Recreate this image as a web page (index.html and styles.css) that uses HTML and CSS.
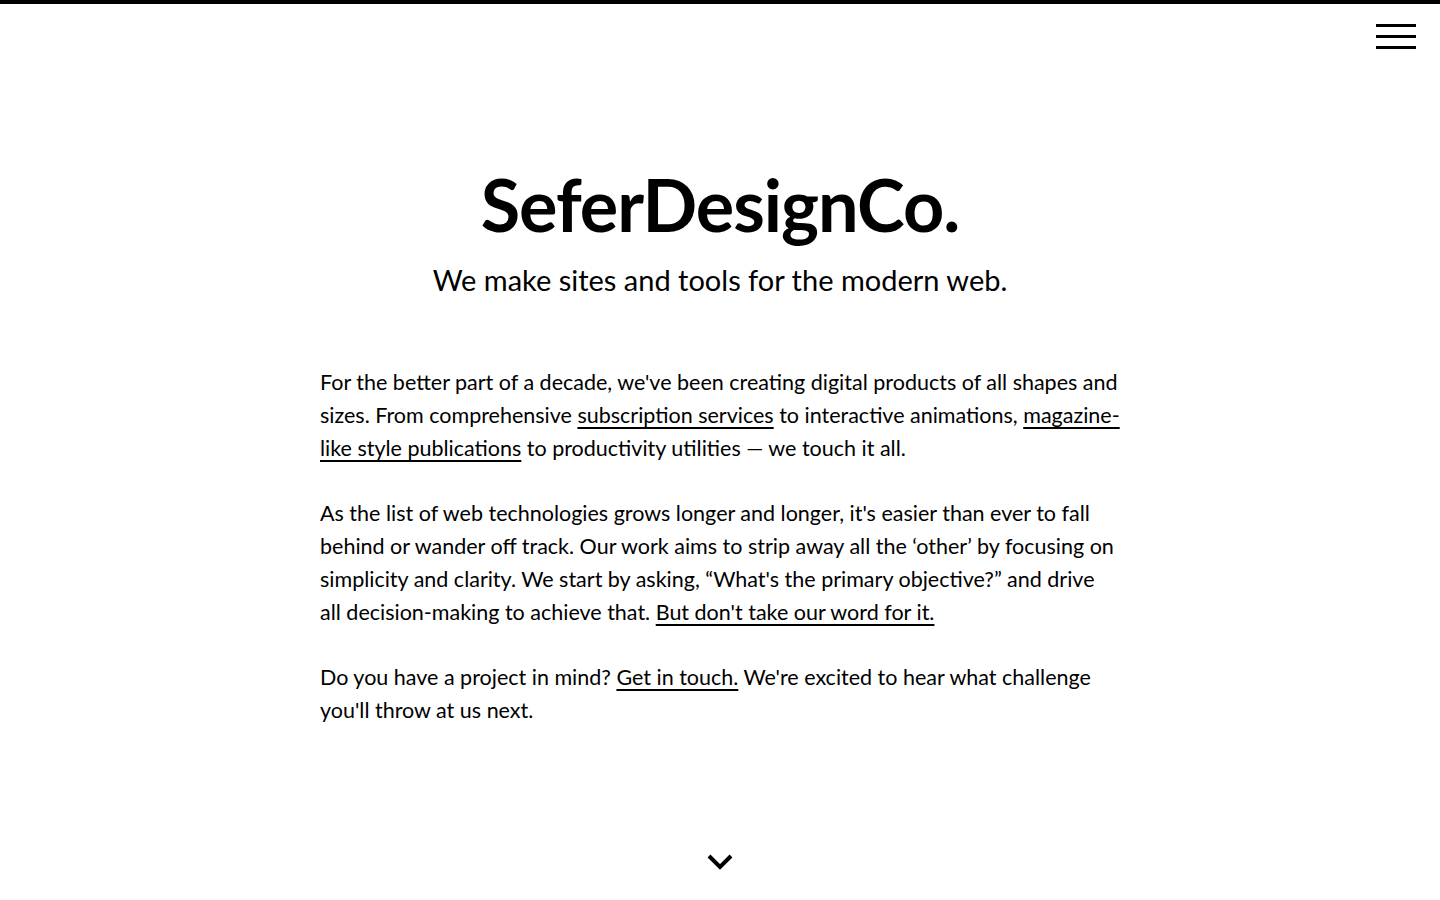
FILE: index.html
```html
<!DOCTYPE html>
<html lang="en">
<head>
<meta charset="utf-8">
<title>SeferDesignCo.</title>
<link rel="stylesheet" href="styles.css">
</head>
<body>
<div class="page">
  <header class="topbar">
    <button class="menu" aria-label="Menu">
      <span class="bar"></span><span class="bar"></span><span class="bar"></span>
    </button>
  </header>
  <main class="content">
    <h1 class="title">SeferDesignCo.</h1>
    <p class="tagline">We make sites and tools for the modern web.</p>
    <div class="copy">
      <p>For the better part of a decade, we've been creating digital products of all shapes and sizes. From comprehensive <a href="#">subscription services</a> to interactive animations, <a href="#">magazine-like style publications</a> to productivity utilities — we touch it all.</p>
      <p>As the list of web technologies grows longer and longer, it's easier than ever to fall behind or wander off track. Our work aims to strip away all the ‘other’ by focusing on simplicity and clarity. We start by asking, “What's the primary objective?” and drive all&nbsp;decision-making to achieve that. <a href="#">But don't take our word for it.</a></p>
      <p>Do you have a project in mind? <a href="#">Get in touch.</a> We're excited to hear what challenge you'll throw at us next.</p>
    </div>
  </main>
  <footer class="more">
    <svg class="chev" width="26" height="16" viewBox="0 0 26 16"><path d="M2 2 L13 13 L24 2" fill="none" stroke="#000" stroke-width="4"/></svg>
  </footer>
</div>
</body>
</html>
```
FILE: styles.css
```css
html, body { margin: 0; padding: 0; }
body {
  background: #fff;
  color: #000;
  font-family: Lato, "Liberation Sans", sans-serif;
  border-top: 4px solid #000;
}
.page {
  min-height: 896px;
  display: flex;
  flex-direction: column;
}
.topbar {
  display: flex;
  justify-content: flex-end;
  padding: 20px 24px 0 0;
}
.menu {
  background: none;
  border: 0;
  padding: 0;
  width: 40px;
  display: flex;
  flex-direction: column;
  gap: 8px;
  cursor: pointer;
}
.bar { display: block; width: 40px; height: 3px; background: #000; }
.content {
  width: 800px;
  margin: 0 auto;
  flex: 1;
}
.title {
  margin: 112px 0 0;
  text-align: center;
  font-size: 72px;
  font-weight: 700;
  line-height: 1.2;
  letter-spacing: -1px;
}
.tagline {
  margin: 16px 0 0;
  text-align: center;
  font-size: 29px;
  font-weight: 400;
  line-height: 1.2;
}
.copy { margin-top: 68px; }
.copy p {
  margin: 0 0 32px;
  font-size: 21.5px;
  line-height: 33px;
}
.copy a { color: #000; text-decoration: underline; text-underline-offset: 4px; text-decoration-thickness: 1.5px; }
.more {
  display: flex;
  justify-content: center;
  padding-bottom: 30px;
}
.chev { display: block; }
```
